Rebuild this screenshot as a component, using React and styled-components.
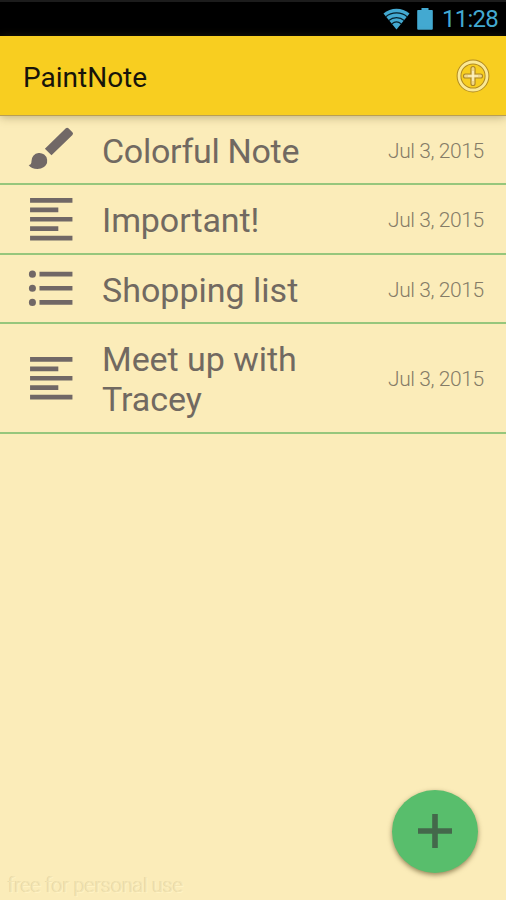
import React from 'react';
import styled, { createGlobalStyle } from 'styled-components';

const GlobalStyle = createGlobalStyle`
  * { box-sizing: border-box; }
  body { margin: 0; background: #fbecb9; font-family: Roboto, "Liberation Sans", sans-serif; }
`;

const Screen = styled.div`
  width: 506px;
  height: 900px;
  display: flex;
  flex-direction: column;
  background: #fbecb9;
  overflow: hidden;
`;

const StatusBar = styled.div`
  height: 36px;
  flex: none;
  display: flex;
  align-items: center;
  justify-content: flex-end;
  padding: 0 8px 0 0;
  background: #000;
  border-top: 2px solid #1c1c1c;
  color: #43a9d1;
`;

const WifiIcon = styled.svg`
  width: 27px;
  height: 22px;
  margin-right: 7px;
`;

const BatteryIcon = styled.svg`
  width: 16px;
  height: 22px;
  margin-right: 9.5px;
`;

const Clock = styled.span`
  width: 56px;
  font-size: 24px;
  line-height: 30px;
  letter-spacing: -0.75px;
  white-space: nowrap;
`;

const AppBar = styled.header`
  position: relative;
  height: 80px;
  flex: none;
  display: flex;
  align-items: center;
  justify-content: space-between;
  padding: 2px 16px 0 23px;
  background: #f8ce20;
  border-bottom: 1px solid #b99f54;
  box-shadow: 0 1px 9px rgba(95, 80, 30, 0.4);
`;

const AppTitle = styled.h1`
  margin: 2px 0 0;
  font-size: 28px;
  line-height: 34px;
  font-weight: 400;
  letter-spacing: 0;
  color: #17140a;
`;

const AddIcon = styled.svg`
  width: 34px;
  height: 34px;
  margin-top: -2px;
`;

const NoteList = styled.ul`
  flex: 1;
  margin: 0;
  padding: 0;
  list-style: none;
`;

const NoteRow = styled.li`
  height: ${(p) => p.$height}px;
  display: flex;
  align-items: center;
  padding: 0 20px 0 23px;
  border-bottom: 2px solid #96c67c;
`;

const NoteIcon = styled.svg`
  width: 56.5px;
  height: 56.5px;
  flex: none;
  margin-right: 22.5px;
  fill: #716866;
`;

const NoteTitle = styled.div`
  flex: 1;
  padding: 2px 70px 0 0;
  font-size: 34px;
  line-height: 40px;
  letter-spacing: ${(p) => p.$tracking}px;
  color: #716961;
`;

const NoteDate = styled.div`
  flex: none;
  width: 98px;
  padding-top: 2px;
  font-size: 21px;
  line-height: 26px;
  font-weight: 300;
  letter-spacing: -0.42px;
  white-space: nowrap;
  color: #857c67;
`;

const Footer = styled.footer`
  flex: none;
  display: flex;
  align-items: flex-end;
  justify-content: space-between;
  height: 112px;
  padding: 0 28px 0 8px;
`;

const Watermark = styled.span`
  font-size: 20px;
  line-height: 24px;
  padding-bottom: 3px;
  font-weight: 300;
  letter-spacing: -0.25px;
  color: #f3e4b2;
  text-shadow: -1px 0 0 #e5d7a5, 1px 1px 0 #fff3c4;
`;

const AddButton = styled.button`
  align-self: flex-start;
  width: 86px;
  height: 83px;
  margin-top: 2px;
  padding: 0 0 2px;
  border: 0;
  border-radius: 50%;
  display: flex;
  align-items: center;
  justify-content: center;
  background: #58be6c;
  box-shadow: 0 2px 5px rgba(80, 65, 25, 0.6);
`;

const PlusIcon = styled.svg`
  width: 34px;
  height: 34px;
`;

const ICONS = {
  brush:
    'M18.2 3.1a.8.8 0 0 1 1.1 0L21 4.8a.8.8 0 0 1 0 1.1L12.1 14.6 9.3 11.8zM2.4 18.7C3.3 18.7 3.6 18.1 3.6 17.1A3.35 3.35 0 1 1 7.6 20.2C5.5 20.7 3.3 20.1 2.4 18.7z',
  text: 'M3 3h18v2H3zM3 7h12v2H3zM3 11h18v2H3zM3 15h12v2H3zM3 19h18v2H3z',
  list:
    'M4 10.5a1.5 1.5 0 1 0 0 3 1.5 1.5 0 0 0 0-3zm0-6a1.5 1.5 0 1 0 0 3 1.5 1.5 0 0 0 0-3zm0 12a1.5 1.5 0 1 0 0 3 1.5 1.5 0 0 0 0-3zM7 19h14v-2H7zm0-6h14v-2H7zm0-8v2h14V5z',
};

const NOTES = [
  { icon: 'brush', title: 'Colorful Note', height: 69, tracking: -0.3 },
  { icon: 'text', title: 'Important!', height: 70, tracking: -0.1 },
  { icon: 'list', title: 'Shopping list', height: 69, tracking: 0 },
  { icon: 'text', title: 'Meet up with Tracey', height: 110, tracking: -0.05 },
];

export default function App() {
  return (
    <Screen>
      <GlobalStyle />
      <StatusBar>
        <WifiIcon viewBox="0 0 28 22" preserveAspectRatio="none">
          <path d="M0.5 5.5C8 -1 20 -1 27.5 5.5L14 21.5Z" fill="#43a9d1" />
          <g fill="none" stroke="#07202c" strokeWidth="1.2">
            <path d="M3 8.8C9 3.6 19 3.6 25 8.8" />
            <path d="M6 12.5C10.5 8.7 17.5 8.7 22 12.5" />
            <path d="M9 16C12 13.5 16 13.5 19 16" />
          </g>
        </WifiIcon>
        <BatteryIcon viewBox="0 0 16 22">
          <path d="M4.5 0h7v2H15a.8.8 0 0 1 .8.8v18a1 1 0 0 1-1 1H1.2a1 1 0 0 1-1-1v-18A.8.8 0 0 1 1 2h3.5z" fill="#43a9d1" />
        </BatteryIcon>
        <Clock>11:28</Clock>
      </StatusBar>
      <AppBar>
        <AppTitle>PaintNote</AppTitle>
        <AddIcon viewBox="0 0 34 34" fill="none">
          <circle cx="17" cy="17" r="14" stroke="#b08a22" strokeWidth="4.8" />
          <circle cx="17" cy="17" r="14" stroke="#fbe995" strokeWidth="2.8" />
          <path d="M17 9.5v15M9.5 17h15" stroke="#ab8628" strokeWidth="5.2" strokeLinecap="round" />
          <path d="M17 9.5v15M9.5 17h15" stroke="#f1d787" strokeWidth="3" strokeLinecap="round" />
          <path d="M17 12v10M12 17h10" stroke="#fff7cf" strokeWidth="1.2" />
        </AddIcon>
      </AppBar>
      <NoteList>
        {NOTES.map((note) => (
          <NoteRow key={note.title} $height={note.height}>
            <NoteIcon viewBox="0 0 24 24">
              <path d={ICONS[note.icon]} />
            </NoteIcon>
            <NoteTitle $tracking={note.tracking}>{note.title}</NoteTitle>
            <NoteDate>Jul 3, 2015</NoteDate>
          </NoteRow>
        ))}
      </NoteList>
      <Footer>
        <Watermark>free for personal use</Watermark>
        <AddButton aria-label="Add note">
          <PlusIcon viewBox="0 0 34 34">
            <path d="M17 2.8v28.4M2.8 17h28.4" stroke="#44684b" strokeWidth="5.6" strokeLinecap="square" />
          </PlusIcon>
        </AddButton>
      </Footer>
    </Screen>
  );
}
